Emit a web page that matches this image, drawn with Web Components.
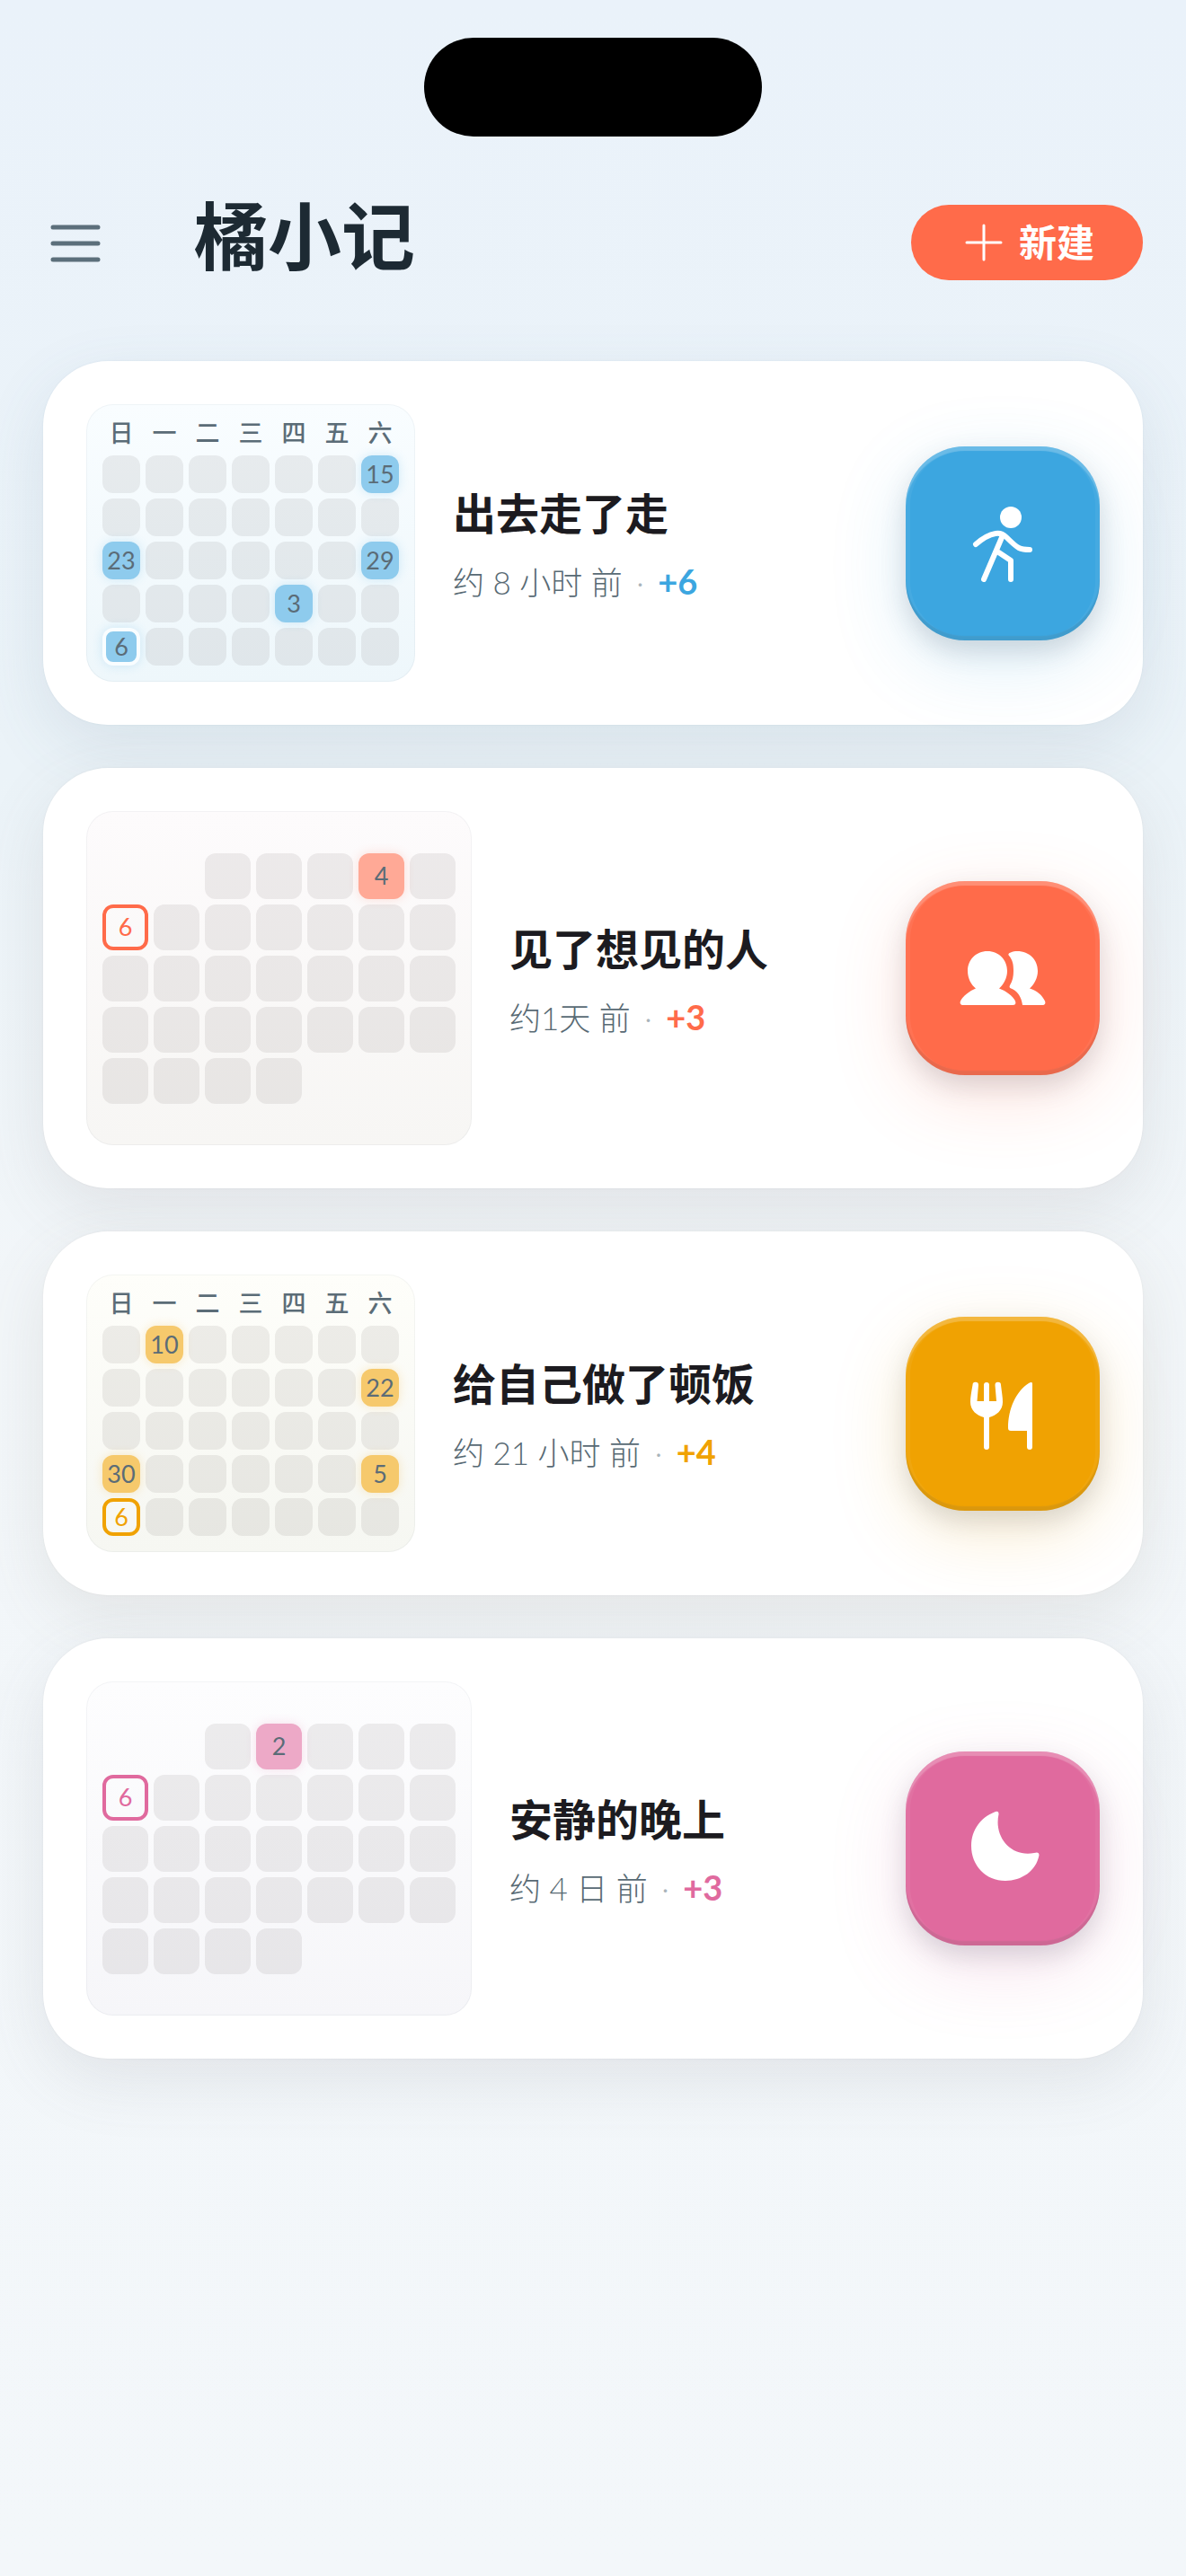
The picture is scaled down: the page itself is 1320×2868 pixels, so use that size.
<!DOCTYPE html>
<html lang="zh-CN">
<head>
<meta charset="utf-8">
<meta name="viewport" content="width=device-width, initial-scale=1">
<title>橘小记</title>
<style>
  body {
    margin: 0;
    min-height: 100vh;
    background: linear-gradient(#eaf2fa, #ebf3f8 30%, #f2f6f9 50%, #f3f7fa);
    font-family: Lato, "Noto Sans CJK SC", sans-serif;
    color: #1c1b20;
  }
</style>
</head>
<body>
<moment-app>
  <app-header slot="header">橘小记</app-header>

  <moment-card name="出去走了走" when="约 8 小时 前" score="+6" style="--tint: #3ca6e0; --shade: 70, 110, 135">
    <mini-calendar slot="calendar" weekdays count="35" marks="6:15,14:23,20:29,25:3,28:6" today="28" style="--top: #f9fdff; --bottom: #eef7fb"></mini-calendar>
    <svg slot="icon" viewBox="0 0 216 216" fill="none" stroke="#fff" stroke-width="6" stroke-linecap="round" stroke-linejoin="round">
      <circle cx="117" cy="79" r="12" fill="#fff" stroke="none"/>
      <path d="M78 109C86 102 94 98 100 97C105 96 108 97 112 101C118 107 122 111 126 113C130 115 134 115 138 115"/>
      <path d="M108 99L87 148M102 117L117 127V148"/>
    </svg>
  </moment-card>

  <moment-card name="见了想见的人" when="约1天 前" score="+3" style="--tint: #ff6b4a; --shade: 110, 95, 95">
    <mini-calendar slot="calendar" large offset="2" count="30" marks="3:4" today="5" label="6" style="--top: #fdfbfc; --bottom: #f7f6f4"></mini-calendar>
    <svg slot="icon" viewBox="0 0 216 216" fill="#fff">
      <path d="M91 78c13 0 22 10 22 22c0 8-4 15-9 19.500c8 3 15 8 18 14c1 3 0 4.500-3 4.500H64c-3 0-4-2-3-4.500c3-6 10-11 17-14c-5-4-9-11-9-19.500c0-12 9-22 22-22z"/>
      <path d="M115 83C112 80 120 78 124 78C138 78 147 88 147 100C147 108 143 115 138 119.500C146 122 152 127 155 133.500C156 136 155 138 152 138H130C129 131 127 127 123 123C119 119 114 120 116 116C119 111 120 106 120 100C120 92 119 88 115 83Z"/>
    </svg>
  </moment-card>

  <moment-card name="给自己做了顿饭" when="约 21 小时 前" score="+4" style="--tint: #f0a202; --shade: 115, 110, 90">
    <mini-calendar slot="calendar" weekdays count="35" marks="1:10,13:22,21:30,27:5" today="28" label="6" style="--top: #fefefa; --bottom: #f6f7f2"></mini-calendar>
    <svg slot="icon" viewBox="0 0 216 216" fill="#fff">
      <path d="M74.500 76a3 3 0 0 1 6.500 0L79.500 94H87V76a3 3 0 0 1 6 0V94H101L99.500 76a3 3 0 0 1 6.500 0C107 84 108 90 108 95C108 104 101 110 93 112V145a3 3 0 0 1-6 0V112C79 110 72 104 72 95C72 90 73 84 74.500 76Z"/>
      <path d="M141 75C141 72 139 73 137 74C123 83 114 102 114 124Q114 127 117 127H135V145a3 3 0 0 0 6 0Z"/>
    </svg>
  </moment-card>

  <moment-card name="安静的晚上" when="约 4 日 前" score="+3" style="--tint: #e06a9e; --shade: 100, 95, 110">
    <mini-calendar slot="calendar" large offset="2" count="30" marks="1:2" today="5" label="6" style="--top: #fdfdfe; --bottom: #f6f6f9"></mini-calendar>
    <svg slot="icon" viewBox="0 0 216 216" fill="#fff">
      <path d="M100 67Q104 66 103.500 70C98 95 117 118 143 113Q149 111 148.400 116C145 133 129 144 111 144C89 144 73 127 73 105C73 87 84 73 100 67Z"/>
    </svg>
  </moment-card>
</moment-app>

<script>
class MomentApp extends HTMLElement {
  constructor() {
    super();
    this.attachShadow({ mode: 'open' });
  }

  connectedCallback() {
    this.shadowRoot.innerHTML = `
      <style>
        :host {
          display: block;
          padding: 42px 48px;
        }

        .island {
          width: 376px;
          height: 110px;
          margin: 0 auto 76px;
          border-radius: 55px;
          background: #000;
        }

        main {
          display: flex;
          flex-direction: column;
          gap: 48px;
          margin-top: 90px;
        }
      </style>
      <div class="island"></div>
      <slot name="header"></slot>
      <main><slot></slot></main>
    `;
  }
}

class AppHeader extends HTMLElement {
  constructor() {
    super();
    this.attachShadow({ mode: 'open' });
  }

  connectedCallback() {
    this.shadowRoot.innerHTML = `
      <style>
        :host {
          display: block;
        }

        header {
          display: flex;
          align-items: center;
          height: 84px;
        }

        button {
          padding: 0;
          border: none;
          background: none;
          font: inherit;
          cursor: pointer;
        }

        .menu svg {
          display: block;
          width: 72px;
          height: 72px;
        }

        h1 {
          flex: 1;
          margin: 0 0 0 96px;
          padding-bottom: 16px;
          font-size: 82px;
          line-height: 84px;
          font-weight: 600;
          color: #1d2a33;
        }

        .create {
          display: flex;
          align-items: center;
          gap: 12px;
          height: 84px;
          padding: 0 54px;
          border-radius: 42px;
          background: #ff6b4a;
          color: #fff;
          font-size: 42px;
          line-height: 48px;
          font-weight: 600;
        }

        .create svg {
          width: 54px;
          height: 54px;
        }
      </style>
      <header>
        <button class="menu" aria-label="菜单">
          <svg viewBox="0 0 72 72" stroke="#5c6f7b" stroke-width="5" stroke-linecap="round">
            <path d="M11 19H61M11 37H61M11 55H61"/>
          </svg>
        </button>
        <h1><slot></slot></h1>
        <button class="create">
          <svg viewBox="0 0 54 54" stroke="#fff" stroke-width="3" stroke-linecap="round">
            <path d="M8 27H46M27 8V46"/>
          </svg>
          <span>新建</span>
        </button>
      </header>
    `;
  }
}

class MomentCard extends HTMLElement {
  constructor() {
    super();
    this.attachShadow({ mode: 'open' });
  }

  connectedCallback() {
    const name = this.getAttribute('name');
    const when = this.getAttribute('when');
    const score = this.getAttribute('score');

    this.shadowRoot.innerHTML = `
      <style>
        :host {
          display: block;
        }

        article {
          display: flex;
          align-items: center;
          gap: 42px;
          padding: 48px;
          border-radius: 72px;
          background: #fff;
          box-shadow: 0 0 2px rgba(var(--shade), 0.1), 0 24px 72px rgba(var(--shade), 0.12);
        }

        .text {
          flex: 1;
          display: flex;
          flex-direction: column;
          gap: 14px;
        }

        h2 {
          margin: 0;
          font-size: 48px;
          line-height: 72px;
          font-weight: 600;
        }

        p {
          margin: 0;
          font-size: 35px;
          line-height: 50px;
          font-weight: 300;
          color: #586a74;
          white-space: nowrap;
        }

        .dot {
          margin: 0 6px;
          color: #a9b4ba;
        }

        .score {
          font-size: 38px;
          font-weight: 700;
          color: var(--tint);
        }

        button {
          flex: none;
          width: 216px;
          height: 216px;
          padding: 0;
          border: none;
          border-radius: 66px;
          background: var(--tint);
          box-shadow:
            inset 0 5px 1px rgba(255, 255, 255, 0.2),
            inset 0 0 0 5px rgba(255, 255, 255, 0.05),
            inset 0 -5px 1px rgba(0, 0, 0, 0.09),
            0 12px 28px rgba(60, 70, 90, 0.18),
            0 24px 84px color-mix(in srgb, var(--tint) 18%, transparent);
          cursor: pointer;
        }

        ::slotted(svg) {
          display: block;
          width: 100%;
          height: 100%;
        }
      </style>

      <article>
        <slot name="calendar"></slot>
        <div class="text">
          <h2>${name}</h2>
          <p>${when} <span class="dot">·</span> <span class="score">${score}</span></p>
        </div>
        <button aria-label="${name}"><slot name="icon"></slot></button>
      </article>
    `;
  }
}

class MiniCalendar extends HTMLElement {
  constructor() {
    super();
    this.attachShadow({ mode: 'open' });
  }

  // marks is a list of "cell index:day", today is a cell index
  renderRows() {
    const offset = Number(this.getAttribute('offset') || 0);
    const count = Number(this.getAttribute('count'));
    const today = Number(this.getAttribute('today'));
    const marks = {};
    this.getAttribute('marks').split(',').forEach((item) => {
      const [index, day] = item.split(':');
      marks[index] = day;
    });

    let rows = '';
    for (let row = 0; row < 5; row++) {
      rows += '<tr>';
      for (let col = 0; col < 7; col++) {
        const index = row * 7 + col - offset;
        const names = [];
        let text = '';
        if (index < 0 || index >= count) {
          names.push('blank');
        }
        if (index in marks) {
          names.push('mark');
          text = marks[index];
        }
        if (index === today) {
          names.push('today');
          text = text || this.getAttribute('label');
        }
        rows += `<td class="${names.join(' ')}">${text}</td>`;
      }
      rows += '</tr>';
    }
    return rows;
  }

  connectedCallback() {
    const weekdays = this.hasAttribute('weekdays')
      ? `<thead><tr>${[...'日一二三四五六'].map((day) => `<th>${day}</th>`).join('')}</tr></thead>`
      : '';

    this.shadowRoot.innerHTML = `
      <style>
        :host {
          --cell: 42px;
          display: flex;
          align-items: center;
          flex: none;
          box-sizing: border-box;
          padding: 12px;
          border-radius: 30px;
          background: linear-gradient(var(--top), var(--bottom));
          box-shadow: inset 0 0 0 1px rgba(60, 80, 90, 0.05);
        }

        :host([large]) {
          --cell: 51px;
          min-height: 372px;
        }

        table {
          border-collapse: separate;
          border-spacing: 6px;
        }

        th {
          height: 33px;
          padding: 0;
          font-size: 27px;
          line-height: 28px;
          font-weight: 500;
          vertical-align: top;
          color: #5b6c77;
        }

        td {
          box-sizing: border-box;
          width: var(--cell);
          min-width: var(--cell);
          height: var(--cell);
          padding: 0;
          border-radius: 12px;
          background: rgba(30, 20, 20, 0.07);
          font-size: 27px;
          line-height: 30px;
          text-align: center;
          color: #5b6c77;
        }

        .blank {
          background: none;
        }

        .mark {
          background: color-mix(in srgb, var(--tint) 58%, #fff);
          box-shadow: 0 0 12px color-mix(in srgb, var(--tint) 20%, transparent);
        }

        .today {
          border: 4px solid var(--tint);
          background: none;
          color: var(--tint);
        }

        .mark.today {
          border-color: #f9fdff;
          background: color-mix(in srgb, var(--tint) 58%, #fff);
          color: #5b6c77;
        }
      </style>
      <table>${weekdays}<tbody>${this.renderRows()}</tbody></table>
    `;
  }
}

customElements.define('moment-app', MomentApp);
customElements.define('app-header', AppHeader);
customElements.define('moment-card', MomentCard);
customElements.define('mini-calendar', MiniCalendar);
</script>
</body>
</html>
